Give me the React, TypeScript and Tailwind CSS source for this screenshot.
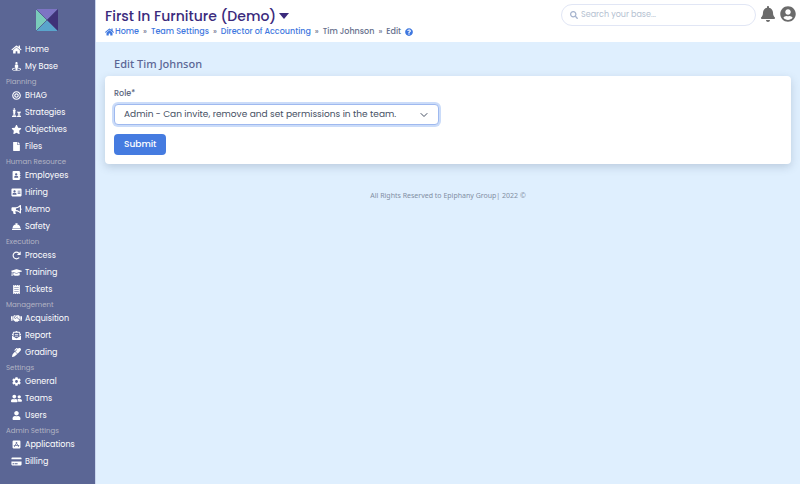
import React from "react";
import type { IconType } from "react-icons";
import {
    FaHome,
    FaStreetView,
    FaBullseye,
    FaChess,
    FaStar,
    FaFile,
    FaAddressBook,
    FaAddressCard,
    FaBullhorn,
    FaConciergeBell,
    FaGraduationCap,
    FaReceipt,
    FaHandshake,
    FaEnvelopeOpenText,
    FaMarker,
    FaCog,
    FaUserFriends,
    FaUser,
    FaAppStoreIos,
    FaCreditCard,
    FaQuestionCircle,
    FaSearch,
    FaBell,
    FaUserCircle
} from "react-icons/fa";
import { FaArrowRotateRight } from "react-icons/fa6";

interface NavItem {
    label: string;
    icon: IconType;
}

interface NavGroup {
    title?: string;
    items: NavItem[];
}

const NAV_GROUPS: NavGroup[] = [
    {
        items: [
            { label: "Home", icon: FaHome },
            { label: "My Base", icon: FaStreetView }
        ]
    },
    {
        title: "Planning",
        items: [
            { label: "BHAG", icon: FaBullseye },
            { label: "Strategies", icon: FaChess },
            { label: "Objectives", icon: FaStar },
            { label: "Files", icon: FaFile }
        ]
    },
    {
        title: "Human Resource",
        items: [
            { label: "Employees", icon: FaAddressBook },
            { label: "Hiring", icon: FaAddressCard },
            { label: "Memo", icon: FaBullhorn },
            { label: "Safety", icon: FaConciergeBell }
        ]
    },
    {
        title: "Execution",
        items: [
            { label: "Process", icon: FaArrowRotateRight },
            { label: "Training", icon: FaGraduationCap },
            { label: "Tickets", icon: FaReceipt }
        ]
    },
    {
        title: "Management",
        items: [
            { label: "Acquisition", icon: FaHandshake },
            { label: "Report", icon: FaEnvelopeOpenText },
            { label: "Grading", icon: FaMarker }
        ]
    },
    {
        title: "Settings",
        items: [
            { label: "General", icon: FaCog },
            { label: "Teams", icon: FaUserFriends },
            { label: "Users", icon: FaUser }
        ]
    },
    {
        title: "Admin Settings",
        items: [
            { label: "Applications", icon: FaAppStoreIos },
            { label: "Billing", icon: FaCreditCard }
        ]
    }
];

const Logo = () => (
    <svg viewBox="0 0 22 22" className="w-[22px] h-[22px]" aria-label="Logo">
        <path d="M0 0H22L11 11Z" fill="#7d74c4" />
        <path d="M22 0V22L11 11Z" fill="#3f3278" />
        <path d="M0 22H22L11 11Z" fill="#5aa5cc" />
        <path d="M0 0V22L11 11Z" fill="#7accbb" />
        <path d="M0 0L22 22M22 0L0 22" stroke="#4b4a86" strokeWidth="0.7" />
    </svg>
);

const Sidebar = () => (
    <aside className="w-24 shrink-0 bg-[#5b6695] border-r border-[#c9d6ee]">
        <div className="flex justify-center pt-[9px] pb-[10px] pr-[2px]">
            <Logo />
        </div>
        <nav>
            {NAV_GROUPS.map((group, idx) => (
                <div key={idx}>
                    {group.title && <h2 className="h-3 pl-[6px] text-[7px] leading-[14px] text-[#b3b5c4]">{group.title}</h2>}
                    {group.items.map(({ label, icon: Icon }) => (
                        <a key={label} href="#" className="flex items-center gap-[3px] h-[17px] pl-[10px] text-[8px] leading-[17px] text-white">
                            <span className="w-3 h-[9px] flex shrink-0 justify-center"><Icon className="max-w-[11px] w-full h-[9px]" /></span>
                            {label}
                        </a>
                    ))}
                </div>
            ))}
        </nav>
    </aside>
);

const Header = () => (
    <header className="flex justify-between h-[42px] bg-white pl-[9px] pr-1">
        <div className="pt-[7px]">
            <button className="flex items-center gap-[3px] h-[18px] text-[14px] leading-[18px] font-medium text-[#3b2a7c]">
                First In Furniture (Demo)
                <svg viewBox="0 0 10 6" className="w-[10px] h-[6px]" fill="currentColor"><path d="M0 0H10L5 6Z" /></svg>
            </button>
            <nav className="flex items-center gap-1 mt-px text-[8px] leading-3 font-medium text-[#3f78e0]">
                <a href="#" className="flex items-center gap-px"><FaHome className="w-[9px] h-2" />Home</a>
                <span className="text-[#7b8198]">»</span>
                <a href="#">Team Settings</a>
                <span className="text-[#7b8198]">»</span>
                <a href="#">Director of Accounting</a>
                <span className="text-[#7b8198]">»</span>
                <span className="text-[#66708c]">Tim Johnson</span>
                <span className="text-[#7b8198]">»</span>
                <span className="text-[#66708c]">Edit</span>
                <a href="#" aria-label="Help"><FaQuestionCircle className="w-2 h-2" /></a>
            </nav>
        </div>
        <div className="flex items-start gap-[5px] pt-1">
            <label className="flex items-center gap-[3px] w-[195px] h-[22px] pl-2 rounded-full border border-[#e1e6f5]">
                <FaSearch className="w-2 h-2 text-[#a5b3cd]" />
                <input type="search" aria-label="Search" placeholder="Search your base..." className="flex-1 min-w-0 text-[8px] outline-none placeholder:text-[#b4bfd1]" />
            </label>
            <button aria-label="Notifications" className="pt-[2px]"><FaBell className="w-[14px] h-4 text-[#6b6b6b]" /></button>
            <button aria-label="Account" className="pt-[2px]"><FaUserCircle className="w-4 h-4 text-[#6b6b6b]" /></button>
        </div>
    </header>
);

export default function App() {
    return (
        <div className="flex min-h-screen bg-[#dfeffe] font-['Poppins','Inter',sans-serif]">
            <Sidebar />
            <div className="flex-1 min-w-0">
                <Header />
                <main className="px-[9px] pt-[14px]">
                    <h1 className="pl-[9px] mb-1 font-['Noto_Sans',sans-serif] text-[11px] leading-4 font-medium text-[#5b6695]">Edit Tim Johnson</h1>
                    <form onSubmit={(e) => e.preventDefault()} className="p-[9px] rounded bg-white shadow-[0_3px_8px_rgba(60,80,110,0.22)]">
                        <label htmlFor="role" className="block mt-[3px] mb-1 text-[8px] leading-3 font-medium text-[#5e6880]">Role*</label>
                        <div className="relative w-[325px] max-w-full">
                            <select id="role" className="block w-full h-[21px] pl-[9px] pr-6 appearance-none rounded-sm border border-[#9fb9ef] ring-2 ring-[#cbdcf9] bg-white text-[9px] text-[#454f63] outline-none">
                                <option>Admin - Can invite, remove and set permissions in the team.</option>
                            </select>
                            <svg viewBox="0 0 16 16" fill="none" stroke="#454f63" strokeWidth="2" strokeLinecap="round" strokeLinejoin="round" className="absolute right-[11px] inset-y-0 my-auto w-2 h-2 pointer-events-none">
                                <path d="M2 5l6 6 6-6" />
                            </svg>
                        </div>
                        <button type="submit" className="block mt-[9px] h-[21px] px-[10px] rounded-sm bg-[#457be0] text-[9px] font-medium text-white">Submit</button>
                    </form>
                    <footer className="mt-[26px] text-center font-['Noto_Sans',sans-serif] text-[7px] leading-3 text-[#7f8ea3]">All Rights Reserved to Epiphany Group| 2022 ©</footer>
                </main>
            </div>
        </div>
    );
}
